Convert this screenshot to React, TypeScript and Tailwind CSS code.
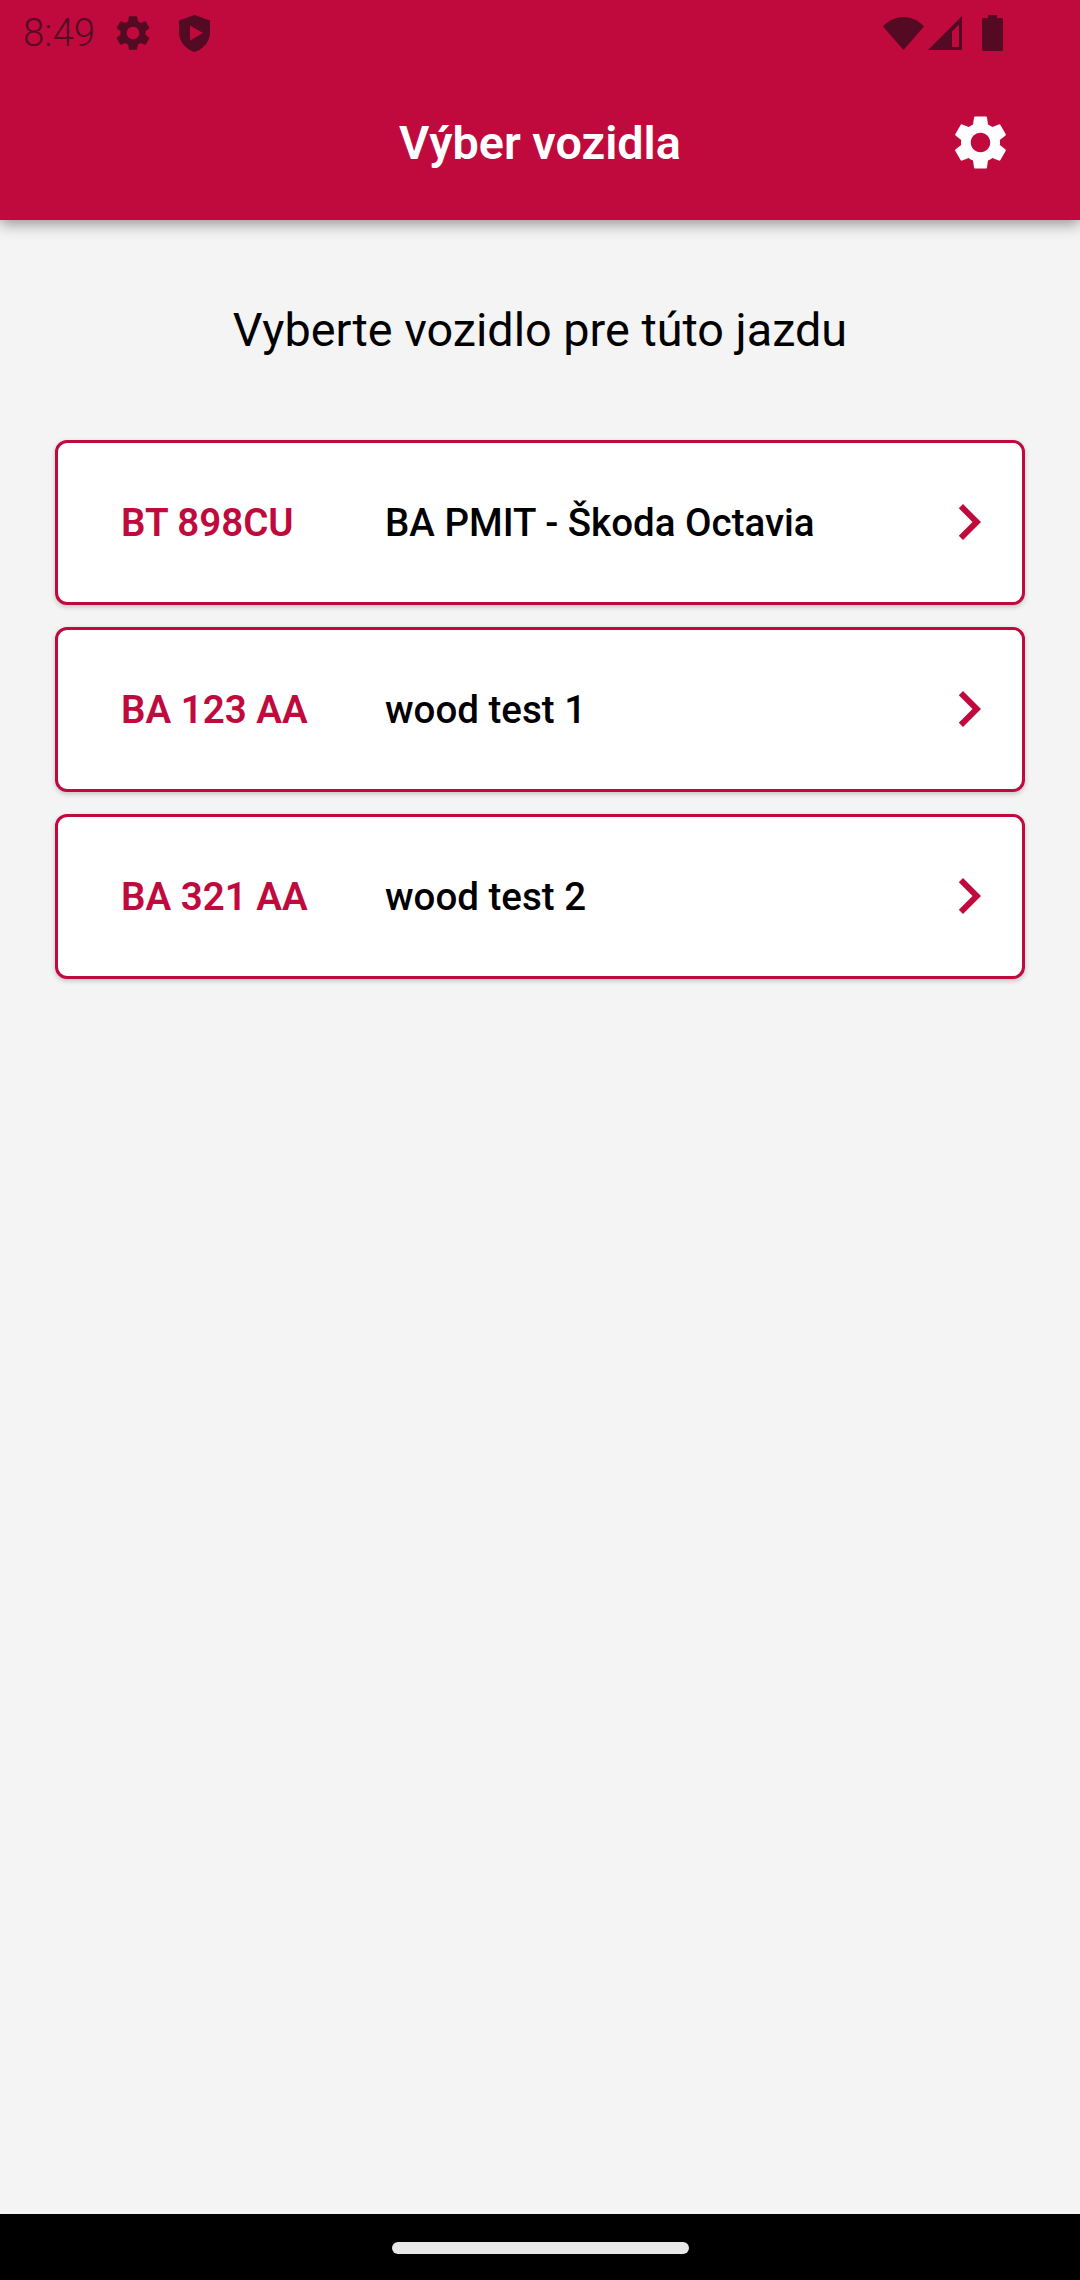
const gearPath =
  "M19.14 12.94c.04-.3.06-.61.06-.94 0-.32-.02-.64-.07-.94l2.03-1.58c.18-.14.23-.41.12-.61l-1.92-3.32c-.12-.22-.37-.29-.59-.22l-2.39.96c-.5-.38-1.03-.7-1.62-.94l-.36-2.54c-.04-.24-.24-.41-.48-.41h-3.84c-.24 0-.43.17-.47.41l-.36 2.54c-.59.24-1.13.57-1.62.94l-2.39-.96c-.22-.08-.47 0-.59.22L2.74 8.87c-.12.21-.08.47.12.61l2.03 1.58c-.05.3-.09.63-.09.94s.02.64.07.94l-2.03 1.58c-.18.14-.23.41-.12.61l1.92 3.32c.12.22.37.29.59.22l2.39-.96c.5.38 1.03.7 1.62.94l.36 2.54c.05.24.24.41.48.41h3.84c.24 0 .44-.17.47-.41l.36-2.54c.59-.24 1.13-.56 1.62-.94l2.39.96c.22.08.47 0 .59-.22l1.92-3.32c.12-.22.07-.47-.12-.61l-2.01-1.58zM12 15.6c-1.98 0-3.6-1.62-3.6-3.6s1.62-3.6 3.6-3.6 3.6 1.62 3.6 3.6-1.62 3.6-3.6 3.6z";

const vehicles = [
  { plate: "BT 898CU", name: "BA PMIT - Škoda Octavia" },
  { plate: "BA 123 AA", name: "wood test 1" },
  { plate: "BA 321 AA", name: "wood test 2" },
];

function StatusBar() {
  return (
    <div className="flex h-[66px] items-center pl-[23px] pr-[77px] text-[#540a22]">
      <span className="w-[73px] text-[38.5px] font-light leading-none">8:49</span>
      <svg viewBox="0 0 24 24" className="ml-[16px] h-[42px] w-[42px]" fill="currentColor">
        <path d={gearPath} />
      </svg>
      {/* shield with play */}
      <svg viewBox="0 0 31 37" className="ml-[25px] h-[37px] w-[31px]" fill="currentColor">
        <path
          fillRule="evenodd"
          d="M15.5 0L31 5.5V17c0 9.500-6.300 17-15.500 20C6.300 34 0 26.500 0 17V5.500L15.500 0zM11 10.500v15L24 18 11 10.500z"
        />
      </svg>
      <div className="ml-auto flex items-center">
        <svg viewBox="0 0 41 33" className="h-[33px] w-[41px]" fill="currentColor">
          <path d="M0 9.500C5.500 3.500 12.500 0 20.500 0S35.500 3.500 41 9.500L20.500 33 0 9.500z" />
        </svg>
        <svg viewBox="0 0 34 34" className="ml-[4px] h-[34px] w-[34px]" fill="currentColor">
          <path fillRule="evenodd" d="M34 0v34H0L34 0zM31 8.500l-7 7V31h7V8.500z" />
        </svg>
        <svg viewBox="0 0 21 36" className="ml-[20px] h-[36px] w-[21px]" fill="currentColor">
          <path d="M6 0h9v3h4.500c.8 0 1.500.7 1.500 1.500v30c0 .8-.7 1.500-1.500 1.500h-18C.7 36 0 35.300 0 34.500v-30C0 3.700.7 3 1.500 3H6V0z" />
        </svg>
      </div>
    </div>
  );
}

function VehicleRow({ plate, name }: { plate: string; name: string }) {
  return (
    <div className="flex h-[165px] items-center rounded-[12px] border-[3px] border-[#c00a3e] bg-white pl-[63px] pr-[17px] shadow-[0_2px_5px_rgba(0,0,0,0.2)]">
      <span className="w-[264px] text-[38.5px] font-semibold text-[#c00a3e]">{plate}</span>
      <span className="text-[38.5px] font-medium text-black">{name}</span>
      <svg viewBox="0 0 24 24" className="ml-auto h-[72px] w-[72px] -translate-y-px" fill="#c00a3e">
        <path d="M10 6L8.590 7.410 13.170 12l-4.580 4.590L10 18l6-6z" />
      </svg>
    </div>
  );
}

export default function App() {
  return (
    <div className="flex h-[2280px] w-[1080px] flex-col overflow-hidden bg-[#f4f4f4] font-['Roboto',sans-serif]">
      <header className="relative z-10 h-[220px] bg-[#c00a3e] shadow-[0_4px_14px_rgba(0,0,0,0.4)]">
        <StatusBar />
        <div className="flex h-[154px] items-center pb-[2px] pl-[948px]">
          <svg viewBox="0 0 24 24" className="h-[65px] w-[65px]" fill="#ffffff">
            <path d={gearPath} />
          </svg>
        </div>
        <h1 className="absolute left-0 right-0 top-[112px] text-center text-[46.75px] font-semibold leading-[62px] text-white">
          Výber vozidla
        </h1>
      </header>
      <main className="flex-1 px-[55px]">
        <p className="mt-[84px] text-center text-[46.75px] leading-[52px] text-black">Vyberte vozidlo pre túto jazdu</p>
        <div className="mt-[84px] flex flex-col gap-[22px]">
          {vehicles.map((v) => (
            <VehicleRow key={v.plate} plate={v.plate} name={v.name} />
          ))}
        </div>
      </main>
      <div className="flex h-[66px] items-center justify-center bg-black pt-[1px]">
        <div className="h-[12px] w-[297px] rounded-full bg-[#e8e8e8]" />
      </div>
    </div>
  );
}
